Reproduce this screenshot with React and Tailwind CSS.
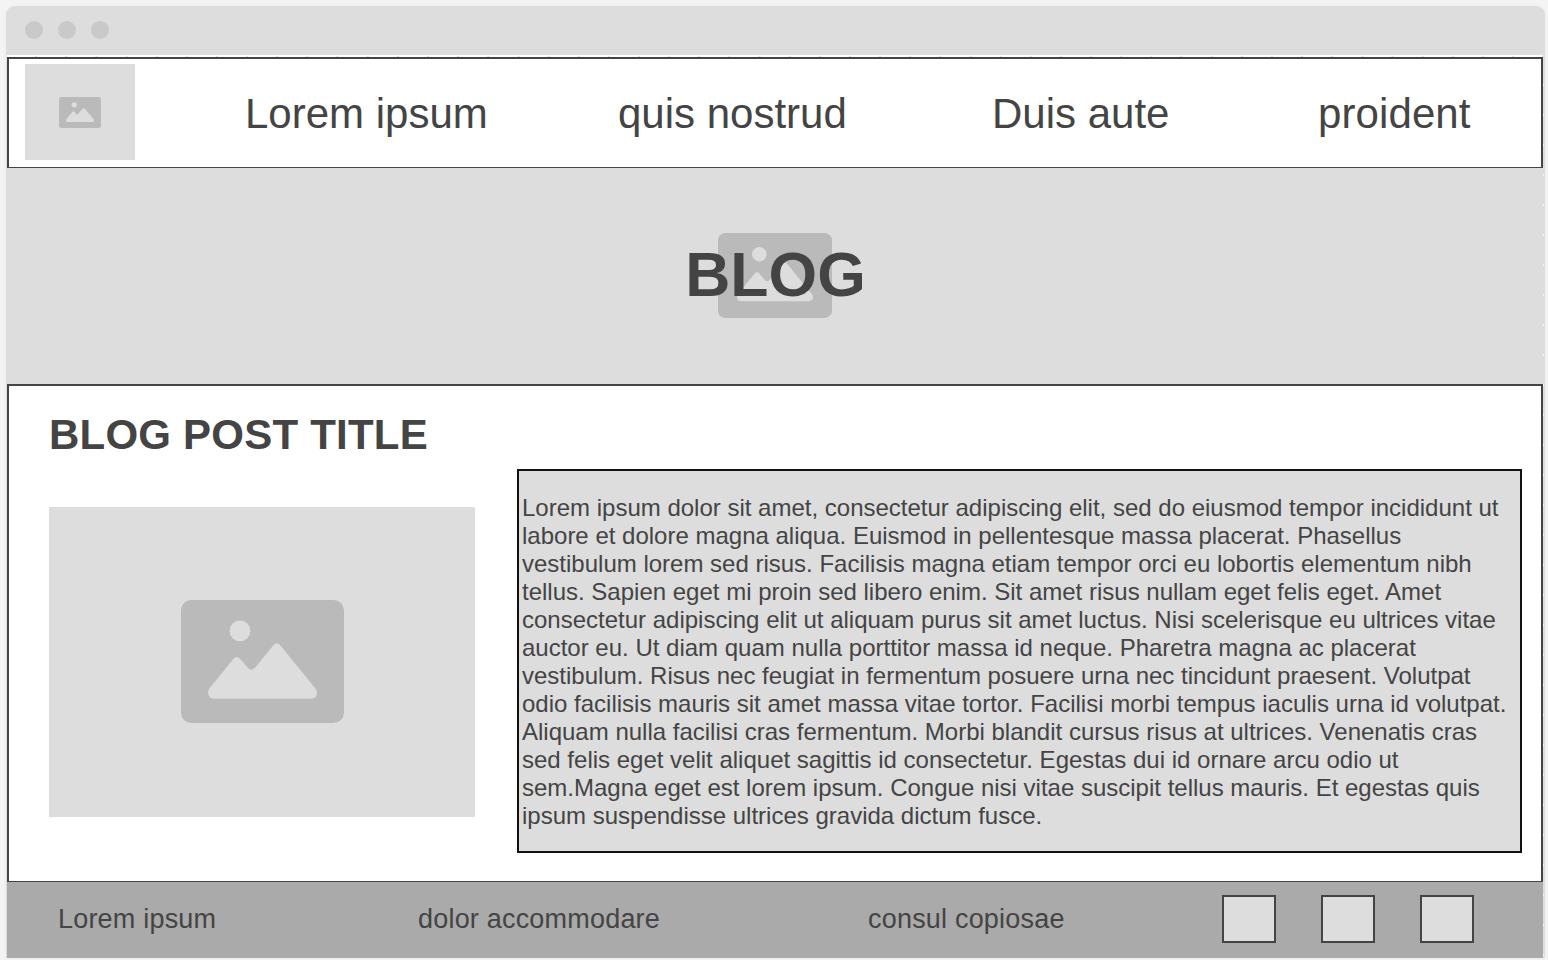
const paragraph = [
  'Lorem ipsum dolor sit amet, consectetur adipiscing elit, sed do eiusmod tempor incididunt ut',
  'labore et dolore magna aliqua. Euismod in pellentesque massa placerat. Phasellus',
  'vestibulum lorem sed risus. Facilisis magna etiam tempor orci eu lobortis elementum nibh',
  'tellus. Sapien eget mi proin sed libero enim. Sit amet risus nullam eget felis eget. Amet',
  'consectetur adipiscing elit ut aliquam purus sit amet luctus. Nisi scelerisque eu ultrices vitae',
  'auctor eu. Ut diam quam nulla porttitor massa id neque. Pharetra magna ac placerat',
  'vestibulum. Risus nec feugiat in fermentum posuere urna nec tincidunt praesent. Volutpat',
  'odio facilisis mauris sit amet massa vitae tortor. Facilisi morbi tempus iaculis urna id volutpat.',
  'Aliquam nulla facilisi cras fermentum. Morbi blandit cursus risus at ultrices. Venenatis cras',
  'sed felis eget velit aliquet sagittis id consectetur. Egestas dui id ornare arcu odio ut',
  'sem.Magna eget est lorem ipsum. Congue nisi vitae suscipit tellus mauris. Et egestas quis',
  'ipsum suspendisse ultrices gravida dictum fusce.',
];

function Picture({ className }) {
  return (
    <svg viewBox="0 0 163 123" preserveAspectRatio="none" className={className} aria-hidden="true">
      <rect width="163" height="123" rx="10.5" fill="#bababa" />
      <circle cx="59" cy="30.8" r="10.4" fill="#ddd" />
      <path
        d="M33 98.8Q29 98.8 27.5 95Q26 91.5 28.8 88L52.3 59Q55.8 54.8 59.3 59L66.8 67.8Q70.3 71.8 74 67.8L92.2 45.4Q95.8 41.2 99.4 45.4L134.2 88.2Q137 91.8 135.5 95.2Q133.8 98.8 130 98.8Z"
        fill="#ddd"
      />
    </svg>
  );
}

function Header() {
  return (
    <header className="ml-px flex h-[111px] w-[1536px] border-2 border-b border-[#444] bg-white pl-4 pt-[5px]">
      <div className="flex h-24 w-[110px] shrink-0 items-center justify-center bg-[#ddd]">
        <Picture className="h-[31px] w-[42px]" />
      </div>
      <nav className="flex pt-[26px] text-[42px] leading-[48px] whitespace-nowrap">
        <a className="ml-[110px] w-[373px]">Lorem ipsum</a>
        <a className="w-[374px]">quis nostrud</a>
        <a className="w-[326px]">Duis aute</a>
        <a className="tracking-[0.1px]">proident</a>
      </nav>
    </header>
  );
}

function Hero() {
  return (
    <section className="grid h-[216px] w-[1538px] place-items-center bg-[#ddd]">
      <Picture className="col-start-1 row-start-1 mb-px h-[85px] w-[114px]" />
      <h1 className="z-10 col-start-1 row-start-1 mb-1 ml-px text-[62.5px] leading-[72px] font-bold">BLOG</h1>
    </section>
  );
}

function Post() {
  return (
    <main className="ml-px h-[498px] w-[1536px] border-2 border-b border-[#444] bg-white">
      <h2 className="h-[83px] pt-[25px] pl-10 text-[42px] leading-[48px] font-bold tracking-[0.22px]">
        BLOG POST TITLE
      </h2>
      <div className="flex">
        <div className="mt-[38px] ml-10 flex h-[310px] w-[426px] shrink-0 items-center justify-center bg-[#ddd] pb-0.5">
          <Picture className="h-[123px] w-[163px]" />
        </div>
        <p className="ml-[42px] h-[384px] w-[1005px] border-2 border-[#111] bg-[#ddd] pt-[23px] pl-[3px] text-[24px] leading-[28px] whitespace-nowrap">
          {paragraph.map((line) => (
            <span key={line} className="block">{line}</span>
          ))}
        </p>
      </div>
    </main>
  );
}

function Footer() {
  return (
    <footer className="ml-px flex h-[76px] w-[1536px] bg-[#aaa] pt-[13px] pl-[51px]">
      <div className="flex pt-2 text-[27px] leading-[32px] tracking-[0.2px] whitespace-nowrap">
        <span className="w-[360px]">Lorem ipsum</span>
        <span className="w-[450px]">dolor accommodare</span>
        <span className="w-[354px]">consul copiosae</span>
      </div>
      <div className="flex gap-[45px]">
        <span className="h-12 w-[54px] border-2 border-[#444] bg-[#ddd]" />
        <span className="h-12 w-[54px] border-2 border-[#444] bg-[#ddd]" />
        <span className="h-12 w-[54px] border-2 border-[#444] bg-[#ddd]" />
      </div>
    </footer>
  );
}

export default function App() {
  return (
    <div className="h-[960px] w-[1548px] overflow-hidden bg-[#f4f4f4] pt-1.5 pl-1.5 font-['Liberation_Sans',Arial,sans-serif] text-[#444]">
      <div className="relative h-[952px] w-[1539px] rounded-t-[9px] bg-[#ddd] shadow-[0_0_4px_rgba(0,0,0,0.04)]">
        <div className="flex h-[49px] items-start gap-[15px] pt-[15px] pl-[19px]">
          <i className="size-[18px] rounded-full bg-[#c9c9c9]" />
          <i className="size-[18px] rounded-full bg-[#c9c9c9]" />
          <i className="size-[18px] rounded-full bg-[#c9c9c9]" />
        </div>
        <div className="ml-px h-0.5 w-[1536px] bg-white">
          <div className="h-full bg-[linear-gradient(to_right,transparent_28px,#ddd_28px)] bg-[length:30.15px_1px] bg-[position:0_1px] bg-repeat-x" />
        </div>
        <Header />
        <Hero />
        <Post />
        <Footer />
        <div className="absolute top-[50px] right-[1px] h-[900px] w-px bg-[linear-gradient(to_bottom,transparent_28px,#f4f4f4_28px)] bg-[length:1px_30px]" />
      </div>
    </div>
  );
}
